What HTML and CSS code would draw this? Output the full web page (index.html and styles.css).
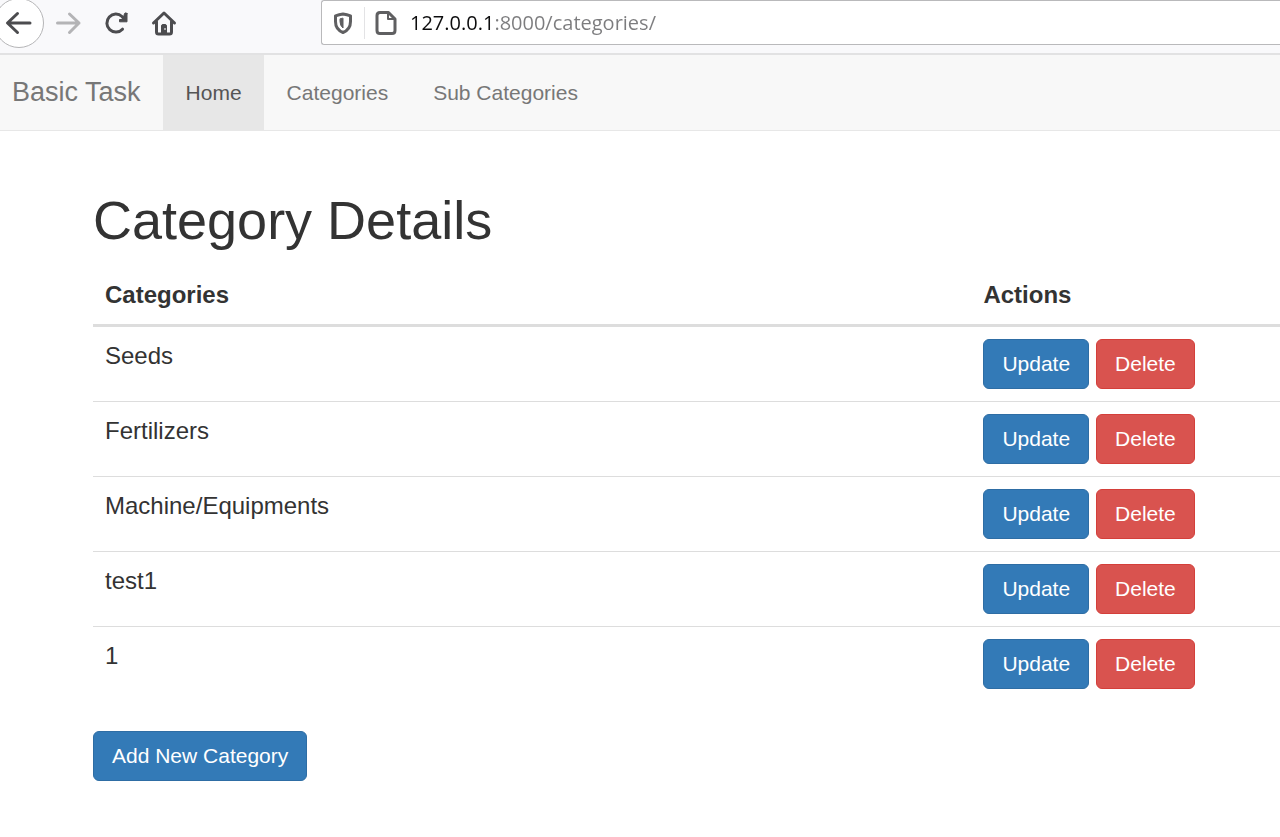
FILE: index.html
```html
<!DOCTYPE html>
<html lang="en">
<head>
<meta charset="utf-8">
<title>Category Details</title>
<link rel="stylesheet" href="styles.css">
</head>
<body>
<div class="toolbar">
  <div class="tools">
    <button class="tool back" type="button" aria-label="Back">
      <svg width="28" height="28" viewBox="0 0 28 28"><path d="M25 14H3.500M12.500 4.500L2.500 14L12.500 23.500"/></svg>
    </button>
    <button class="tool forward" type="button" aria-label="Forward">
      <svg width="28" height="28" viewBox="0 0 28 28"><path d="M3.500 14H25M15.500 5L25 14L15.500 23.500"/></svg>
    </button>
    <button class="tool" type="button" aria-label="Reload">
      <svg width="28" height="28" viewBox="0 0 28 28"><path d="M20.500 20.200A9 9 0 1 1 20 7.500L22.500 10.500"/><path class="solid" d="M25 4.500V12.800H17.500V10.500H21L22.500 4.500Q24 3 25 4.500Z"/></svg>
    </button>
    <button class="tool" type="button" aria-label="Home page">
      <svg width="28" height="28" viewBox="0 0 28 28"><path d="M3.500 14L14 4L24.500 14M6.500 12.500V23Q6.500 25 8.500 25H19.500Q21.500 25 21.500 23V12.500"/><path class="solid" d="M11.500 25V17Q11.500 15.500 13 15.500H15Q16.500 15.500 16.500 17V25Z"/><circle class="knob" cx="15" cy="20" r="1"/></svg>
    </button>
  </div>
  <div class="address">
    <span class="shield">
      <svg width="20" height="24" viewBox="0 0 20 24"><path d="M10 3Q14 3.600 17.500 4.800V10.500Q17.500 18.500 10 21.500Q2.500 18.500 2.500 10.500V4.800Q6 3.600 10 3Z"/><path class="solid" d="M10 7.500V17Q7 14.500 7 10.500V8.200Z"/></svg>
    </span>
    <span class="page-icon">
      <svg width="22" height="26" viewBox="0 0 22 26"><path d="M13.500 2.500H5Q2 2.500 2 5.500V20.500Q2 23.500 5 23.500H17Q20 23.500 20 20.500V9Z"/><path class="fold" d="M13 2.500V9H20"/></svg>
    </span>
    <input class="url" type="text" aria-label="Address" value="127.0.0.1:8000/categories/" spellcheck="false">
  </div>
</div>
<nav class="navbar">
  <a class="brand" href="#">Basic Task</a>
  <a class="nav-link active" href="#">Home</a>
  <a class="nav-link" href="#">Categories</a>
  <a class="nav-link" href="#">Sub Categories</a>
</nav>
<main class="content">
  <h1 class="title">Category Details</h1>
  <table class="table">
    <thead>
      <tr><th class="name-col" scope="col">Categories</th><th scope="col">Actions</th></tr>
    </thead>
    <tbody>
      <tr><td>Seeds</td><td><div class="actions"><button class="btn primary" type="button">Update</button><button class="btn danger" type="button">Delete</button></div></td></tr>
      <tr><td>Fertilizers</td><td><div class="actions"><button class="btn primary" type="button">Update</button><button class="btn danger" type="button">Delete</button></div></td></tr>
      <tr><td>Machine/Equipments</td><td><div class="actions"><button class="btn primary" type="button">Update</button><button class="btn danger" type="button">Delete</button></div></td></tr>
      <tr><td>test1</td><td><div class="actions"><button class="btn primary" type="button">Update</button><button class="btn danger" type="button">Delete</button></div></td></tr>
      <tr><td>1</td><td><div class="actions"><button class="btn primary" type="button">Update</button><button class="btn danger" type="button">Delete</button></div></td></tr>
    </tbody>
  </table>
  <button class="btn primary" type="button">Add New Category</button>
</main>
</body>
</html>
```
FILE: styles.css
```css
* {
  box-sizing: border-box;
}

body {
  margin: 0;
  background: #fff;
  color: #333;
  font-family: "Liberation Sans", Arial, sans-serif;
  font-size: 24px;
  line-height: 34px;
}

button {
  font-family: inherit;
  cursor: pointer;
}

svg {
  display: block;
  fill: none;
  stroke: #4c4c4f;
  stroke-width: 3;
  stroke-linecap: round;
  stroke-linejoin: round;
}

.solid {
  fill: #4c4c4f;
  stroke-width: 1;
}

.knob {
  fill: #c8c8ca;
  stroke: none;
}

/* Browser toolbar */
.toolbar {
  display: flex;
  align-items: flex-start;
  background: #f9f9fb;
  border-bottom: 2px solid #e2e2e3;
  padding-bottom: 8px;
}

.tools {
  display: flex;
  align-items: center;
  flex: none;
  width: 321px;
  height: 45px;
  gap: 4px;
}

.tool {
  display: flex;
  align-items: center;
  justify-content: center;
  flex: none;
  width: 44px;
  height: 44px;
  padding: 0;
  border: 0;
  background: none;
}

.back {
  width: 50px;
  height: 50px;
  margin-left: -6px;
  margin-right: -2px;
  border: 1px solid #b5b5b7;
  border-radius: 50%;
  background: #fff;
}

.forward svg {
  stroke: #b4b4b6;
}

.address {
  display: flex;
  align-items: center;
  flex: 1;
  height: 45px;
  border: 1px solid #b9b9bb;
  border-right: 0;
  border-radius: 3px 0 0 3px;
  background: #fff;
}

.address svg {
  stroke: #5f5f61;
}

.address .solid {
  fill: #5f5f61;
}

.address .fold {
  stroke-width: 2;
}

.shield {
  padding: 4px 11px;
  border-right: 1px solid #e3e3e5;
}

.page-icon {
  padding: 0 13px 0 10px;
}

/* The host is drawn darker than the rest of the address */
.url {
  flex: 1;
  min-width: 0;
  padding: 0;
  border: 0;
  outline: 0;
  background: linear-gradient(to right, #0c0c0d 83px, #7c7c7e 83px);
  -webkit-background-clip: text;
  background-clip: text;
  color: transparent;
  caret-color: #0c0c0d;
  font-family: "Open Sans", "Noto Sans", sans-serif;
  font-size: 20px;
  line-height: 30px;
}

/* Site navigation */
.navbar {
  display: flex;
  background: #f8f8f8;
  border-bottom: 1px solid #e7e7e7;
  padding-left: 12px;
}

.brand,
.nav-link {
  padding: 22px 22px 22px 23px;
  color: #777;
  font-size: 21px;
  line-height: 31px;
  text-decoration: none;
}

.brand {
  padding-left: 0;
  font-size: 27px;
}

.active {
  background: #e7e7e7;
  color: #555;
}

/* Category list */
.content {
  padding: 60px 0 56px 93px;
}

.title {
  margin: 0 0 16px;
  font-size: 54px;
  font-weight: 500;
  line-height: 59px;
}

.table {
  width: 100%;
  margin-bottom: 30px;
  border-collapse: separate;
  border-spacing: 0;
  table-layout: fixed;
}

th,
td {
  padding: 12px;
  text-align: left;
  vertical-align: top;
}

th {
  border-bottom: 3px solid #ddd;
}

tr + tr td {
  border-top: 1px solid #ddd;
}

.name-col {
  width: 74%;
}

.actions {
  display: flex;
  gap: 7px;
}

.btn {
  display: block;
  padding: 9px 18px;
  border: 1px solid;
  border-radius: 6px;
  color: #fff;
  font-size: 21px;
  line-height: 30px;
  white-space: nowrap;
}

.primary {
  background: #337ab7;
  border-color: #2e6da4;
}

.danger {
  background: #d9534f;
  border-color: #d43f3a;
}
```
